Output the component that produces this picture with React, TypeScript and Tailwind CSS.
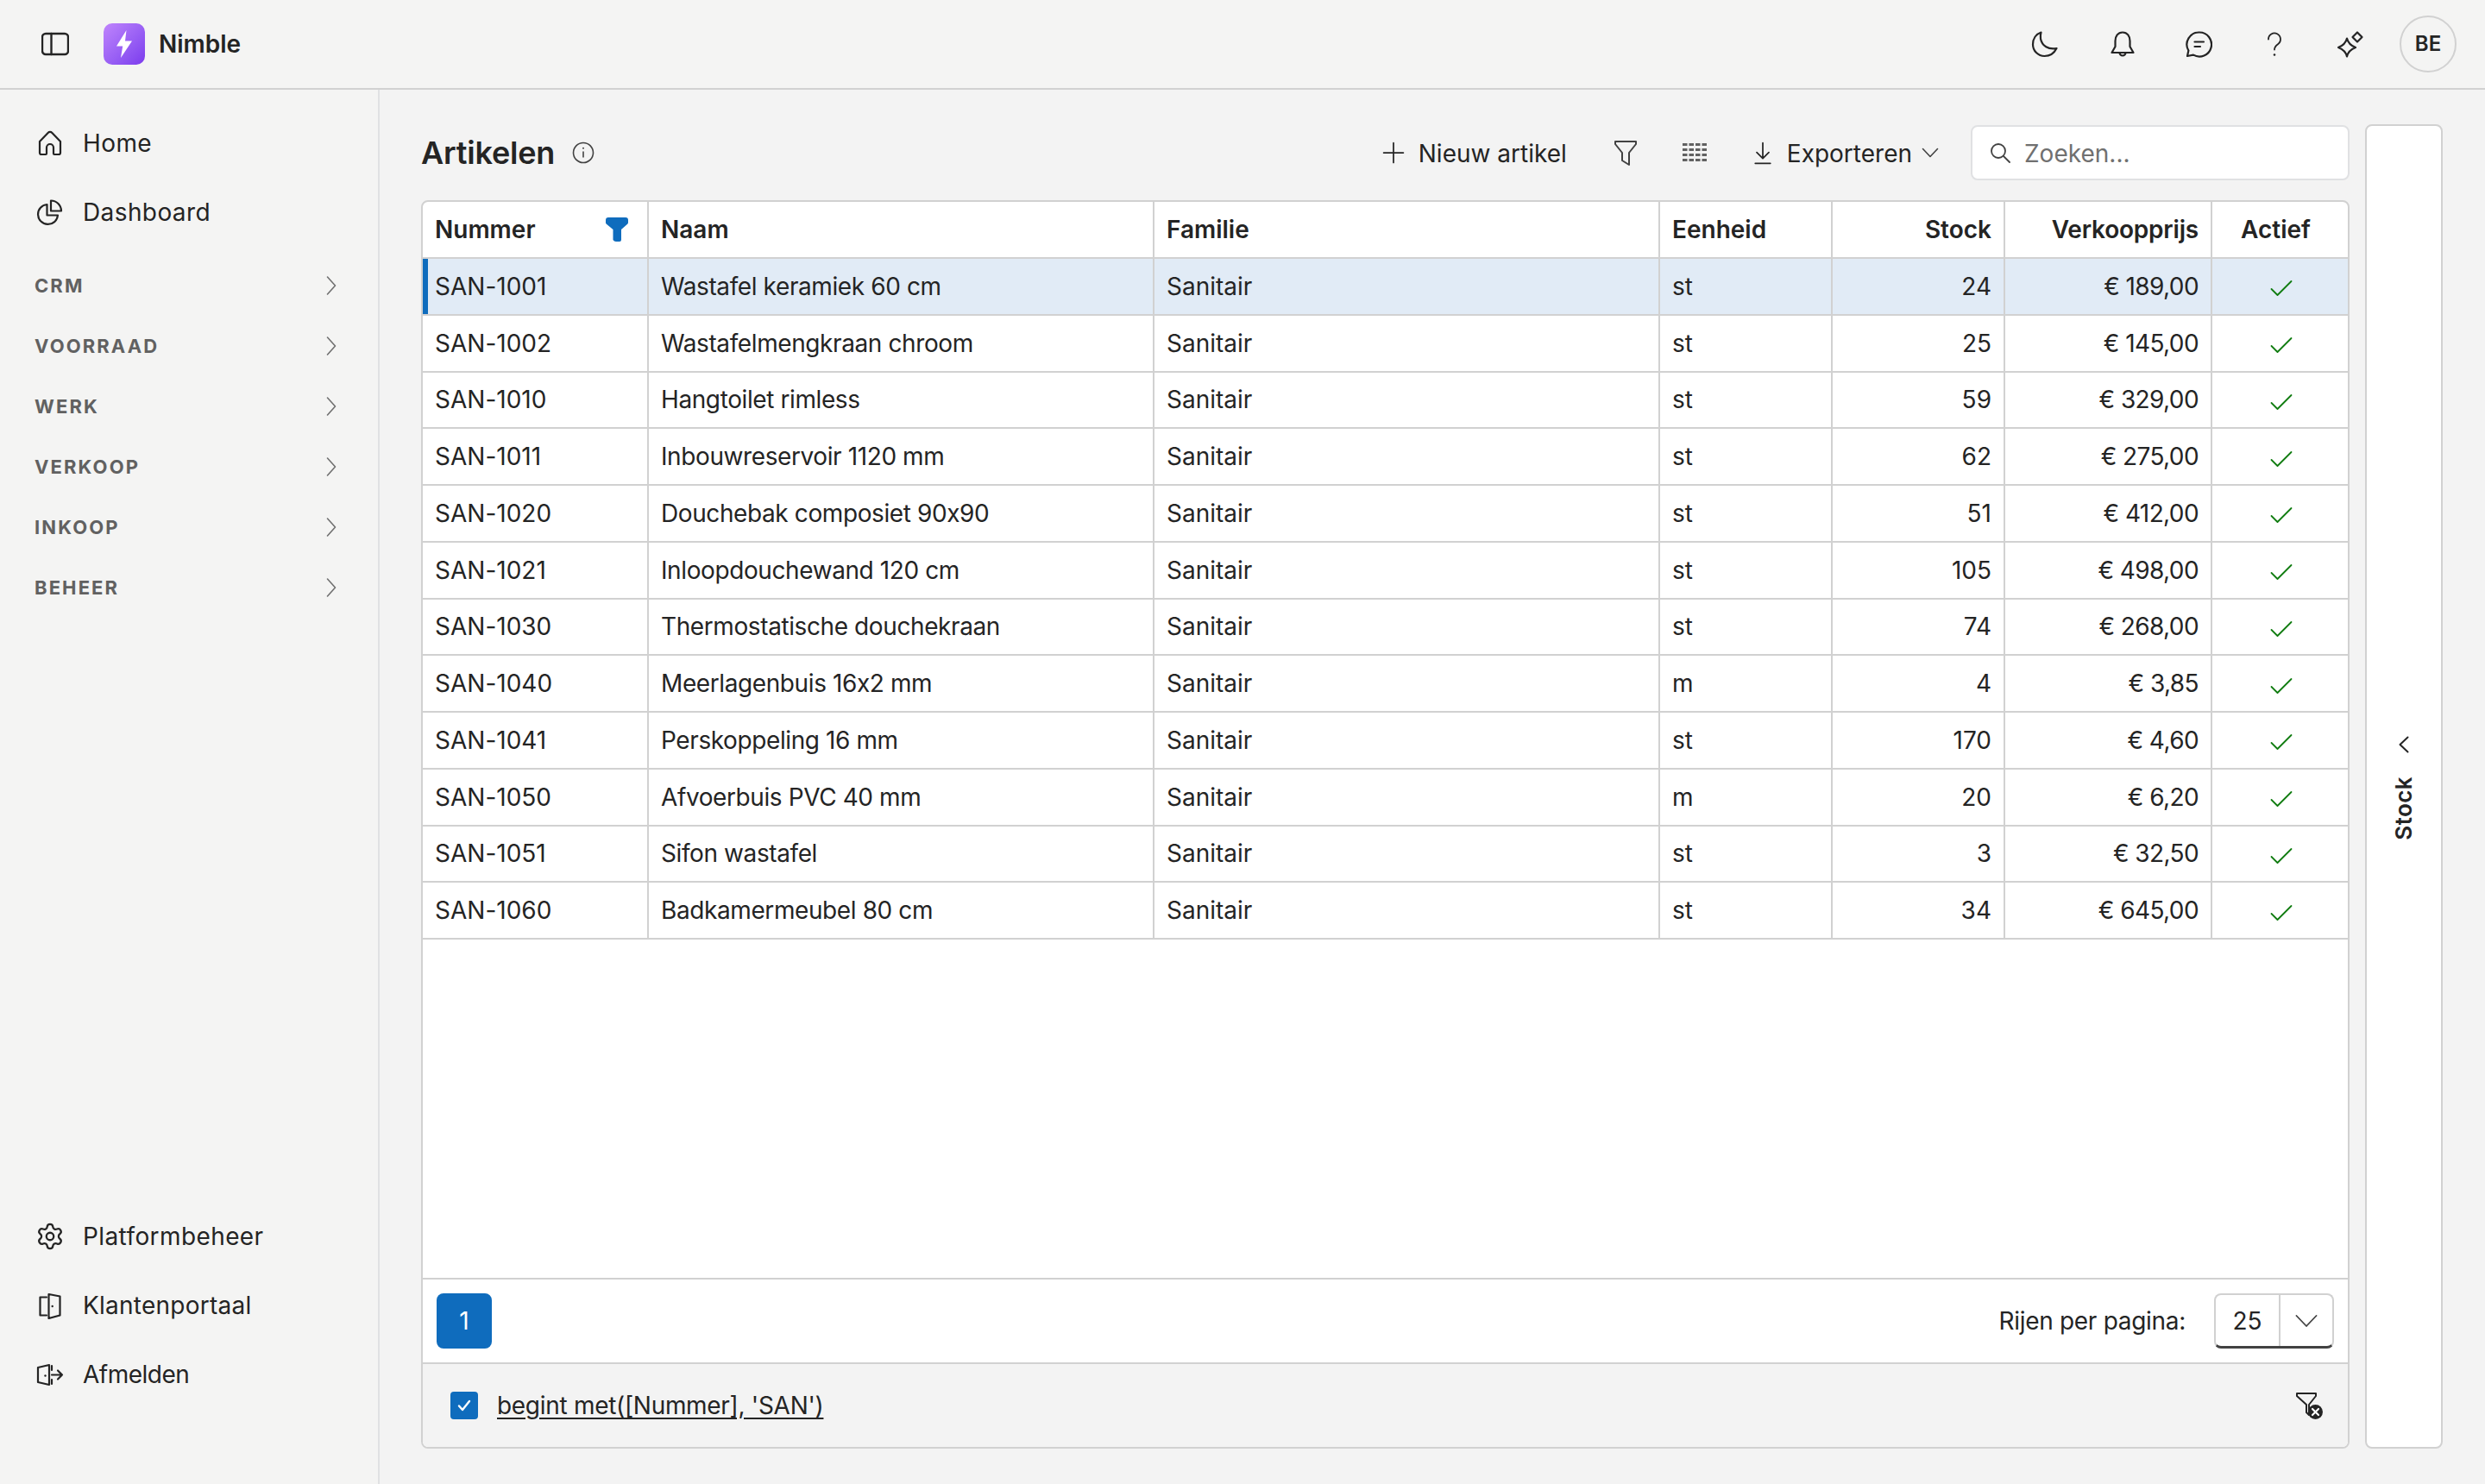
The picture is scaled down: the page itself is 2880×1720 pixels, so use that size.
import { Settings } from "lucide-react";

const artikelen = [
  { nummer: "SAN-1001", naam: "Wastafel keramiek 60 cm", eenheid: "st", stock: 24, prijs: "€ 189,00" },
  { nummer: "SAN-1002", naam: "Wastafelmengkraan chroom", eenheid: "st", stock: 25, prijs: "€ 145,00" },
  { nummer: "SAN-1010", naam: "Hangtoilet rimless", eenheid: "st", stock: 59, prijs: "€ 329,00" },
  { nummer: "SAN-1011", naam: "Inbouwreservoir 1120 mm", eenheid: "st", stock: 62, prijs: "€ 275,00" },
  { nummer: "SAN-1020", naam: "Douchebak composiet 90x90", eenheid: "st", stock: 51, prijs: "€ 412,00" },
  { nummer: "SAN-1021", naam: "Inloopdouchewand 120 cm", eenheid: "st", stock: 105, prijs: "€ 498,00" },
  { nummer: "SAN-1030", naam: "Thermostatische douchekraan", eenheid: "st", stock: 74, prijs: "€ 268,00" },
  { nummer: "SAN-1040", naam: "Meerlagenbuis 16x2 mm", eenheid: "m", stock: 4, prijs: "€ 3,85" },
  { nummer: "SAN-1041", naam: "Perskoppeling 16 mm", eenheid: "st", stock: 170, prijs: "€ 4,60" },
  { nummer: "SAN-1050", naam: "Afvoerbuis PVC 40 mm", eenheid: "m", stock: 20, prijs: "€ 6,20" },
  { nummer: "SAN-1051", naam: "Sifon wastafel", eenheid: "st", stock: 3, prijs: "€ 32,50" },
  { nummer: "SAN-1060", naam: "Badkamermeubel 80 cm", eenheid: "st", stock: 34, prijs: "€ 645,00" },
];

const groups = ["CRM", "VOORRAAD", "WERK", "VERKOOP", "INKOOP", "BEHEER"];

function Icon({ children, size = 32 }: { children: React.ReactNode; size?: number }) {
  return (
    <svg
      width={size}
      height={size}
      viewBox="0 0 32 32"
      fill="none"
      stroke="currentColor"
      strokeWidth={2.2}
      strokeLinecap="round"
      strokeLinejoin="round"
      className="shrink-0"
    >
      {children}
    </svg>
  );
}

function NavItem({ label, icon, tracking = "tracking-[0.4px]" }: { label: string; icon: React.ReactNode; tracking?: string }) {
  return (
    <div className={`flex h-[80px] items-center gap-[22px] pl-[42px] text-[#242424] ${tracking}`}>
      <span className="flex w-[32px] shrink-0 items-center justify-center">{icon}</span>
      <span>{label}</span>
    </div>
  );
}

function TopButton({ children, className = "" }: { children: React.ReactNode; className?: string }) {
  return <div className={`flex w-[88px] items-center justify-center text-[#242424] ${className}`}>{children}</div>;
}

export default function App() {
  return (
    <div className="flex h-[1720px] w-[2880px] flex-col overflow-hidden bg-[#f4f4f3] text-[28px] leading-[36px] text-[#242424] [font-family:Inter,sans-serif] [font-feature-settings:'calt'_0]">
      {/* Top bar */}
      <header className="flex h-[104px] shrink-0 items-center border-b-2 border-[#d1d1d1] pl-[48px] pr-[33px]">
        <Icon>
          <rect x="1" y="4" width="30" height="24" rx="4" strokeWidth={2.4} />
          <path d="M11.5 4v24" strokeWidth={2.4} />
        </Icon>
        <div className="ml-[40px] flex h-[48px] w-[48px] items-center justify-center rounded-[10px] bg-gradient-to-br from-[#c084fc] to-[#7c3aed]">
          <svg width="24" height="34" viewBox="0 0 24 34" fill="#ffffff">
            <path d="M14.5 1 3 19.5h7.2L8 33 21 13.5h-8z" />
          </svg>
        </div>
        <span className="ml-[16px] font-semibold">Nimble</span>
        <div className="ml-auto flex items-center">
          <TopButton className="pr-[4px]">
            <Icon>
              <path d="M11.5 2.5C5.5 4.5 2 10 2 16.5 2 24 8 30 15.5 30c6 0 11-3 14-9-9.5 2-17-3-18.5-11-.5-2.500-.2-5 .5-7.500Z" />
            </Icon>
          </TopButton>
          <TopButton>
            <Icon>
              <path d="M16 2.500C10.500 2.500 7.500 7 7.500 12.500V19L3.500 26H28.500L24.500 19V12.500C24.500 7 21.500 2.500 16 2.500Z" />
              <path d="M12.500 26a3.500 3.500 0 0 0 7 0" />
            </Icon>
          </TopButton>
          <TopButton>
            <Icon>
              <path d="M17 2.500a14 14 0 1 1-7 26.100L3 30l1.400-6.400A14 14 0 0 1 17 2.500Z" />
              <path d="M11.500 13.500H22M11.500 19H18" />
            </Icon>
          </TopButton>
          <TopButton>
            <Icon>
              <path d="M9 10.500a7 7 0 1 1 11 5.700c-2.500 1.800-4 3.300-4 6.300" strokeWidth={1.8} />
              <circle cx="16" cy="28.500" r="1.300" fill="currentColor" stroke="none" />
            </Icon>
          </TopButton>
          <TopButton>
            <Icon>
              <path d="M12 9.500c1.200 5 3.500 8 10 10.500-6.500 2.500-8.800 5.500-10 10.500C10.800 25.500 8.500 22.500 2 20c6.500-2.500 8.800-5.500 10-10.500Z" />
              <path d="M24 2.500l5.500 5.500L24 13.500 18.500 8Z" />
            </Icon>
          </TopButton>
          <div className="ml-[13px] flex h-[66px] w-[66px] items-center justify-center rounded-full border-2 border-[#d1d1d1] text-[24px] font-semibold">
            BE
          </div>
        </div>
      </header>

      <div className="flex min-h-0 flex-1">
        {/* Sidebar */}
        <aside className="flex w-[440px] shrink-0 flex-col border-r-2 border-[#e0e1e3] pb-[87px] pt-[22px]">
          <NavItem
            label="Home"
            icon={
              <Icon>
                <path d="M4 14 13.600 3.900a3.300 3.300 0 0 1 4.800 0L28 14v13a2 2 0 0 1-2 2h-5a1 1 0 0 1-1-1v-7a4 4 0 0 0-8 0v7a1 1 0 0 1-1 1H6a2 2 0 0 1-2-2Z" />
              </Icon>
            }
          />
          <NavItem
            label="Dashboard"
            icon={
              <Icon>
                <path d="M12.500 7A11.500 11.500 0 1 0 25 19.500H12.500Z" />
                <path d="M17 2.500A12 12 0 0 1 29 14.500H17Z" />
              </Icon>
            }
          />
          <div className="mt-[10px] flex flex-col">
            {groups.map((g) => (
              <div key={g} className="flex h-[70px] items-center justify-between pl-[40px] pr-[48px]">
                <span className="text-[22px] font-bold tracking-[2.1px] text-[#616161]">{g}</span>
                <svg width="12" height="24" viewBox="0 0 12 24" fill="none" stroke="#707070" strokeWidth="1.6" strokeLinecap="round" strokeLinejoin="round">
                  <path d="M1.500 2 10.500 12 1.500 22" />
                </svg>
              </div>
            ))}
          </div>
          <div className="mt-auto flex flex-col">
            <NavItem label="Platformbeheer" icon={<Settings size={34} strokeWidth={1.6} className="shrink-0" />} />
            <NavItem
              label="Klantenportaal"
              tracking="tracking-[0.25px]"
              icon={
                <Icon>
                  <path d="M12 6.500H4.500V27.500H12" />
                  <path d="M14.500 3 27.500 5.500V27.500L14.500 31Z" />
                  <circle cx="18.700" cy="17" r="1.200" fill="currentColor" stroke="none" />
                </Icon>
              }
            />
            <NavItem
              label="Afmelden"
              tracking="tracking-[-0.5px]"
              icon={
                <Icon>
                  <path d="M2 8 15 5V28L2 25Z" />
                  <circle cx="10.500" cy="17.500" r="1.200" fill="currentColor" stroke="none" />
                  <path d="M18 6v5M18 22v5M18 16.500H30M25 11.500 30 16.500 25 21.500" />
                </Icon>
              }
            />
          </div>
        </aside>

        {/* Main */}
        <main className="flex min-w-0 flex-1 gap-[18px] bg-[#f3f3f3] pb-[41px] pl-[48px] pr-[49px] pt-[40px]">
          <div className="flex min-w-0 flex-1 flex-col">
            <div className="flex h-[66px] items-center">
              <h1 className="text-[36px] font-semibold leading-[44px] tracking-[-0.2px]">Artikelen</h1>
              <svg width="26" height="26" viewBox="0 0 26 26" fill="none" stroke="#424242" strokeWidth="1.600" className="ml-[20px]">
                <circle cx="13" cy="13" r="11.500" />
                <path d="M13 11.500v7" />
                <circle cx="13" cy="7.800" r="1" fill="#424242" stroke="none" />
              </svg>
              <div className="ml-auto flex items-center">
                <Icon size={28}>
                  <path d="M16 3v26M3 16h26" strokeWidth={2} />
                </Icon>
                <span className="ml-[15px] mt-[2px]">Nieuw artikel</span>
                <svg width="28" height="32" viewBox="0 0 28 32" fill="none" stroke="#424242" strokeWidth="2" strokeLinejoin="round" className="ml-[54px]">
                  <path d="M2 3h24v3l-8 10v14l-8-5v-9L2 6Z" />
                </svg>
                <svg width="28" height="22" viewBox="0 0 28 22" fill="#616161" className="ml-[52px]">
                  {[0, 6, 12, 18].map((y) =>
                    [0, 7.500, 15, 22.500].map((x) => <rect key={`${x}-${y}`} x={x} y={y} width="5.500" height="3" />),
                  )}
                </svg>
                <span className="ml-[51px]">
                  <Icon size={28}>
                    <path d="M16 3v20M8 15.500 16 23.500 24 15.500M6 30h20" strokeWidth={2} />
                  </Icon>
                </span>
                <span className="ml-[14px] mt-[2px]">Exporteren</span>
                <svg width="20" height="12" viewBox="0 0 20 12" fill="none" stroke="#424242" strokeWidth="1.600" strokeLinecap="round" strokeLinejoin="round" className="ml-[11px]">
                  <path d="M1.500 1.500 10 10.500 18.500 1.500" />
                </svg>
                <div className="ml-[37px] flex h-[64px] w-[439px] items-center rounded-[8px] border-2 border-[#e0e1e3] bg-white pl-[20px]">
                  <svg width="24" height="24" viewBox="0 0 24 24" fill="none" stroke="#424242" strokeWidth="1.800" strokeLinecap="round">
                    <circle cx="10" cy="10" r="8" />
                    <path d="M16 16l7 7" />
                  </svg>
                  <span className="ml-[16px] mt-[2px] text-[#707070]">Zoeken...</span>
                </div>
              </div>
            </div>

            <div className="mt-[22px] flex min-h-0 flex-1 flex-col overflow-hidden rounded-[8px] border-2 border-[#d1d1d1] bg-white">
              <div className="min-h-0 flex-1">
                <table className="w-[2232px] table-fixed border-separate border-spacing-0">
                  <colgroup>
                    <col className="w-[262px]" />
                    <col className="w-[586px]" />
                    <col className="w-[586px]" />
                    <col className="w-[200px]" />
                    <col className="w-[200px]" />
                    <col className="w-[240px]" />
                    <col className="w-[158px]" />
                  </colgroup>
                  <thead>
                    <tr className="h-[66px] text-left font-semibold [&>th]:border-b-2 [&>th]:border-r-2 [&>th]:border-[#d1d1d1] [&>th]:px-[14px] [&>th]:font-semibold">
                      <th>
                        <div className="flex items-center justify-between pr-[8px]">
                          <span>Nummer</span>
                          <svg width="26" height="28" viewBox="0 0 26 28" fill="#0f6cbd">
                            <path d="M3 0h20a3 3 0 0 1 3 3v3a2 2 0 0 1-.6 1.400L18 14v12a2 2 0 0 1-2 2h-4a4 4 0 0 1-3.500-2V14L.6 7.400A2 2 0 0 1 0 6V3a3 3 0 0 1 3-3Z" />
                          </svg>
                        </div>
                      </th>
                      <th>Naam</th>
                      <th>Familie</th>
                      <th>Eenheid</th>
                      <th className="text-right">Stock</th>
                      <th className="text-right tracking-[-0.2px]">Verkoopprijs</th>
                      <th className="!border-r-0 !pl-[33px]">Actief</th>
                    </tr>
                  </thead>
                  <tbody>
                    {artikelen.map((a, i) => (
                      <tr
                        key={a.nummer}
                        className={`h-[65.750px] [&>td]:border-b-2 [&>td]:border-r-2 [&>td]:border-[#d1d1d1] [&>td]:px-[14px] ${i === 0 ? "bg-[#e1ebf6]" : ""}`}
                      >
                        <td className={i === 0 ? "shadow-[inset_6px_0_0_#0f6cbd]" : ""}>{a.nummer}</td>
                        <td className="tracking-[-0.4px]">{a.naam}</td>
                        <td>Sanitair</td>
                        <td>{a.eenheid}</td>
                        <td className="text-right">{a.stock}</td>
                        <td className="text-right tracking-[-0.6px]">{a.prijs}</td>
                        <td className="!border-r-0">
                          <svg width="26" height="20" viewBox="0 0 26 20" fill="none" stroke="#107c10" strokeWidth="1.800" strokeLinecap="round" strokeLinejoin="round" className="ml-[53px] mt-[5px]">
                            <path d="M1.500 11 8.500 18 24.500 2" />
                          </svg>
                        </td>
                      </tr>
                    ))}
                  </tbody>
                </table>
              </div>

              {/* Pager */}
              <div className="flex h-[98px] shrink-0 items-center justify-between border-t-2 border-[#d1d1d1] pl-[16px] pr-[16px]">
                <div className="flex h-[64px] w-[64px] items-center justify-center rounded-[8px] bg-[#0f6cbd] text-white">1</div>
                <div className="flex items-center">
                  <span className="tracking-[-0.3px]">Rijen per pagina:</span>
                  <div className="ml-[33px] flex h-[64px] w-[139px] overflow-hidden rounded-[8px] border-2 border-b-[3px] border-[#d1d1d1] border-b-[#424242]">
                    <span className="flex w-[75px] items-center justify-center border-r-2 border-[#d1d1d1]">25</span>
                    <span className="flex flex-1 items-center justify-center">
                      <svg width="26" height="16" viewBox="0 0 26 16" fill="none" stroke="#424242" strokeWidth="1.800" strokeLinecap="round" strokeLinejoin="round">
                        <path d="M1.500 2 13 14 24.500 2" />
                      </svg>
                    </span>
                  </div>
                </div>
              </div>

              {/* Active filter */}
              <div className="flex h-[98px] shrink-0 items-center border-t-2 border-[#d1d1d1] bg-[#f3f3f3] pl-[32px] pr-[29px]">
                <span className="flex h-[32px] w-[32px] items-center justify-center rounded-[4px] bg-[#0f6cbd]">
                  <svg width="20" height="20" viewBox="0 0 20 20" fill="none" stroke="#ffffff" strokeWidth="2.400" strokeLinecap="round" strokeLinejoin="round">
                    <path d="M4 10.500 8 15l8-10" />
                  </svg>
                </span>
                <span className="ml-[22px] tracking-[-0.3px] underline underline-offset-[4px]">begint met([Nummer], 'SAN')</span>
                <svg width="32" height="32" viewBox="0 0 32 32" fill="none" className="ml-auto">
                  <path d="M2 2h22v3l-8 10v12l-3-3v-9L2 5Z" stroke="#242424" strokeWidth="2" strokeLinejoin="round" />
                  <circle cx="23.500" cy="23.500" r="8.500" fill="#242424" />
                  <path d="M20 20l7 7M27 20l-7 7" stroke="#ffffff" strokeWidth="2.200" strokeLinecap="round" />
                </svg>
              </div>
            </div>
          </div>

          {/* Stock panel */}
          <div className="flex w-[90px] shrink-0 flex-col items-center justify-center rounded-[8px] border-2 border-[#d1d1d1] bg-white pt-[4px]">
            <svg width="12" height="20" viewBox="0 0 12 20" fill="none" stroke="#242424" strokeWidth="2" strokeLinecap="round" strokeLinejoin="round">
              <path d="M10.500 1.500 1.500 10 10.500 18.500" />
            </svg>
            <span className="mt-[27px] rotate-180 text-[26px] font-semibold tracking-[0.4px] [writing-mode:vertical-rl]">Stock</span>
          </div>
        </main>
      </div>
    </div>
  );
}
